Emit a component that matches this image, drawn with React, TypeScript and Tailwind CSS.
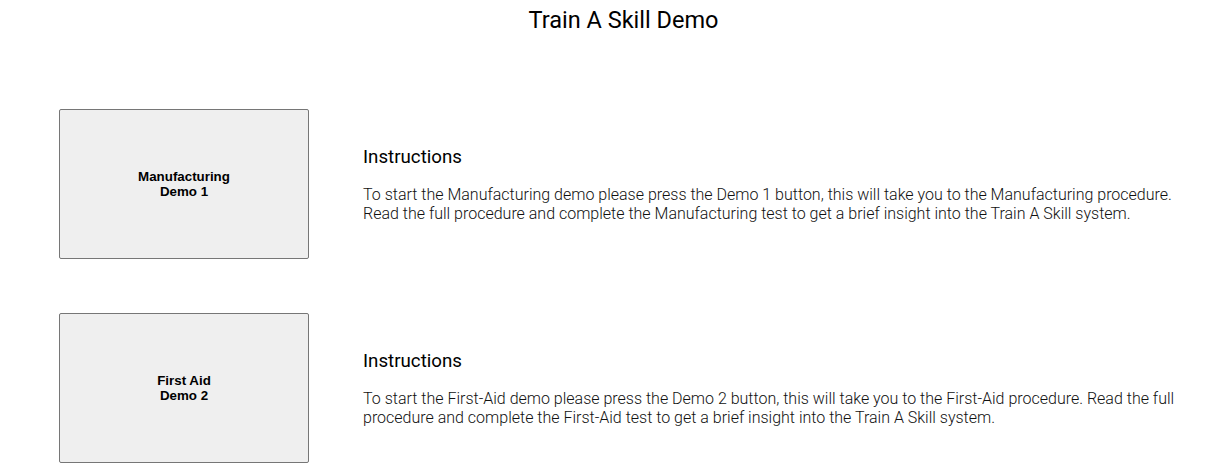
const demos = [
  {
    label: 'Manufacturing',
    num: 'Demo 1',
    text: 'To start the Manufacturing demo please press the Demo 1 button, this will take you to the Manufacturing procedure. Read the full procedure and complete the Manufacturing test to get a brief insight into the Train A Skill system.',
  },
  {
    label: 'First Aid',
    num: 'Demo 2',
    text: 'To start the First-Aid demo please press the Demo 2 button, this will take you to the First-Aid procedure. Read the full procedure and complete the First-Aid test to get a brief insight into the Train A Skill system.',
  },
];

export default function App() {
  return (
    <div className="min-h-[475px] bg-white font-['Roboto',sans-serif] text-black">
      <h1 className="pl-[32px] pt-[6px] text-center text-[23.5px] leading-[28px] font-normal">
        Train A Skill Demo
      </h1>

      <div className="mt-[75px] flex flex-col gap-[54px] pl-[59px] pr-[30px]">
        {demos.map((d) => (
          <div key={d.num} className="flex items-center">
            <button className="flex h-[150px] w-[250px] shrink-0 flex-col items-center justify-center rounded-[2px] border border-[#767676] bg-[#efefef] font-['Liberation_Sans',Arial,sans-serif] text-[13.33px] leading-[15px] font-bold text-black">
              <span>{d.label}</span>
              <span>{d.num}</span>
            </button>
            <div className="ml-[54px] flex-1">
              <h2 className="text-[18.72px] leading-[22px] font-normal">Instructions</h2>
              <p className="mt-[17px] text-[16px] leading-[19px] font-light text-[#111]">
                {d.text}
              </p>
            </div>
          </div>
        ))}
      </div>
    </div>
  );
}
